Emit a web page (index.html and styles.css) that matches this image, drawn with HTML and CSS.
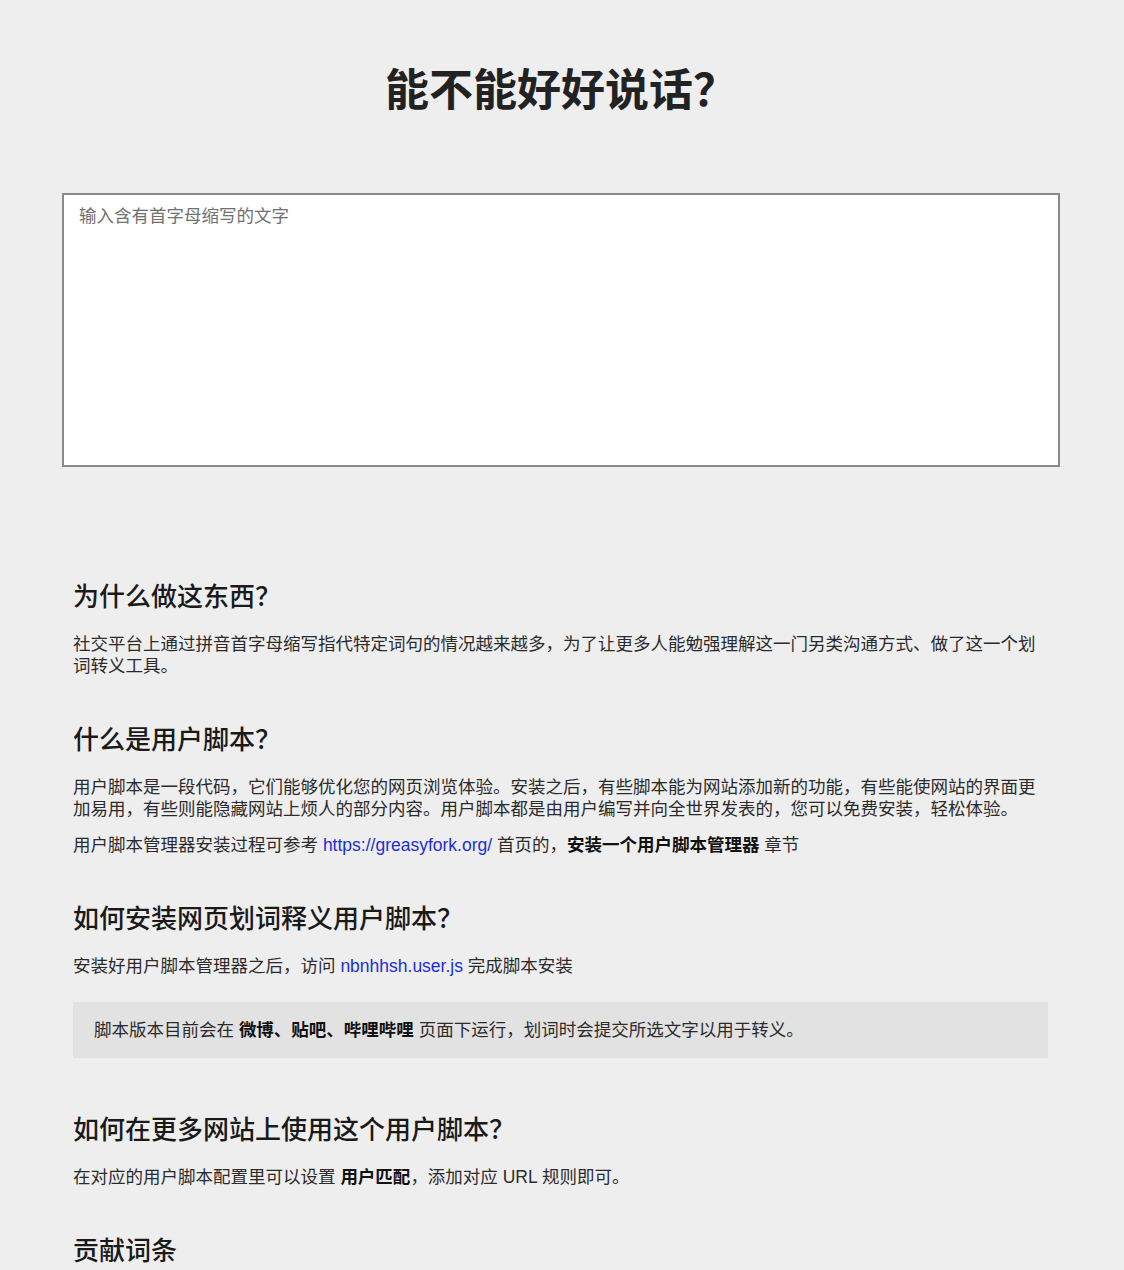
FILE: index.html
```html
<!DOCTYPE html>
<html lang="zh-CN">
<head>
    <meta charset="UTF-8">
    <meta name="viewport" content="width=device-width, initial-scale=1.0">
    <title>能不能好好说话？</title>
    <link rel="stylesheet" href="styles.css">
</head>
<body>
    <div class="wrap">
        <h1 class="title">能不能好好说话？</h1>

        <textarea class="input" placeholder="输入含有首字母缩写的文字"></textarea>

        <div class="article">
            <h2>为什么做这东西？</h2>
            <p>社交平台上通过拼音首字母缩写指代特定词句的情况越来越多，为了让更多人能勉强理解这一门另类沟通方式、做了这一个划词转义工具。</p>

            <h2>什么是用户脚本？</h2>
            <p>用户脚本是一段代码，它们能够优化您的网页浏览体验。安装之后，有些脚本能为网站添加新的功能，有些能使网站的界面更加易用，有些则能隐藏网站上烦人的部分内容。用户脚本都是由用户编写并向全世界发表的，您可以免费安装，轻松体验。</p>
            <p>用户脚本管理器安装过程可参考 <a href="#">https://greasyfork.org/</a> 首页的，<b>安装一个用户脚本管理器</b> 章节</p>

            <h2>如何安装网页划词释义用户脚本？</h2>
            <p>安装好用户脚本管理器之后，访问 <a href="#">nbnhhsh.user.js</a> 完成脚本安装</p>
            <blockquote>脚本版本目前会在 <b>微博、贴吧、哔哩哔哩</b> 页面下运行，划词时会提交所选文字以用于转义。</blockquote>

            <h2>如何在更多网站上使用这个用户脚本？</h2>
            <p>在对应的用户脚本配置里可以设置 <b>用户匹配</b>，添加对应 URL 规则即可。</p>

            <h2>贡献词条</h2>
        </div>
    </div>
</body>
</html>
```

FILE: styles.css
```css
body {
    margin: 0;
    padding: 0;
    background-color: #efeeef;
    color: #2b2b2b;
    font-family: "Liberation Sans", "Noto Sans CJK SC", sans-serif;
    font-size: 17.5px;
    line-height: 22px;
}

.wrap {
    width: 998px;
    margin: 0 auto;
    position: relative;
    left: -1px;
}

.title {
    margin: 61px 0 0;
    font-family: "Noto Sans CJK SC", sans-serif;
    font-size: 44px;
    line-height: 53px;
    font-weight: bold;
    color: #222;
    text-align: center;
}

.input {
    display: block;
    box-sizing: border-box;
    width: 100%;
    height: 274px;
    margin-top: 79px;
    padding: 10px 15px;
    border: 2px solid #8a8a8a;
    background-color: #fff;
    font-family: inherit;
    font-size: 17.5px;
    line-height: 22px;
    color: #333;
    resize: none;
    outline: none;
}

.input::placeholder {
    color: #707070;
}

.article {
    padding: 112px 12px 40px 11px;
}

.article h2 {
    margin: 45px 0 22px;
    font-family: "Noto Sans CJK SC", sans-serif;
    font-size: 26px;
    line-height: 32px;
    font-weight: 500;
    color: #1a1a1a;
}

.article h2:first-child {
    margin-top: 0;
}

.article p {
    margin: 0 0 14px;
}

.article a {
    color: #1c2fd4;
    text-decoration: none;
}

.article b {
    color: #111;
}

.article blockquote {
    margin: 25px 0 54px;
    padding: 17px 21px;
    background-color: #e3e2e3;
}

.article blockquote + h2 {
    margin-top: 0;
}
```
